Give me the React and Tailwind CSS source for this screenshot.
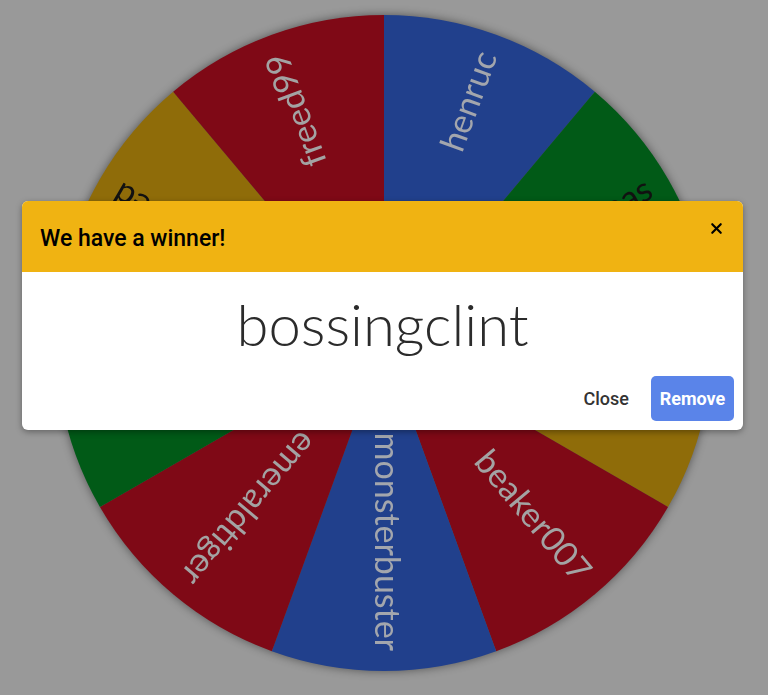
import { X } from "lucide-react";

const CX = 328;
const CY = 328;
const R = 328;

const segments = [
  { name: "henruc", fill: "#21408c", text: "#a3a6ad" },
  { name: "thomas", fill: "#015a17", text: "#111111" },
  { name: "bossingclint", fill: "#8f6c09", text: "#111111" },
  { name: "beaker007", fill: "#7f0916", text: "#a3a3a3" },
  { name: "monsterbuster", fill: "#21408c", text: "#a3a6ad" },
  { name: "emeraldtiger", fill: "#7f0916", text: "#a3a3a3" },
  { name: "jaydenwolf", fill: "#015a17", text: "#111111" },
  { name: "pixelspeed", fill: "#8f6c09", text: "#111111" },
  { name: "freed99", fill: "#7f0916", text: "#a3a3a3" },
];

function point(deg, r) {
  const rad = (deg * Math.PI) / 180;
  return [CX + r * Math.sin(rad), CY - r * Math.cos(rad)];
}

function Wheel() {
  const step = 360 / segments.length;
  return (
    <svg
      width="656"
      height="656"
      viewBox="0 0 656 656"
      className="drop-shadow-[0_0_5px_rgba(0,0,0,0.45)]"
    >
      {segments.map((seg, i) => {
        const a0 = i * step;
        const a1 = a0 + step;
        const [x0, y0] = point(a0, R);
        const [x1, y1] = point(a1, R);
        return (
          <path
            key={seg.name}
            d={`M${CX} ${CY} L${x0} ${y0} A${R} ${R} 0 0 1 ${x1} ${y1} Z`}
            fill={seg.fill}
          />
        );
      })}
      {segments.map((seg, i) => {
        const mid = i * step + step / 2;
        return (
          <text
            key={seg.name + "-label"}
            x={CX + 308}
            y={CY}
            transform={`rotate(${mid - 90} ${CX} ${CY})`}
            textAnchor="end"
            dominantBaseline="middle"
            fill={seg.text}
            style={{ fontFamily: "Lato, 'Noto Sans', sans-serif", fontWeight: 400, fontSize: 34 }}
          >
            {seg.name}
          </text>
        );
      })}
      <circle cx={CX} cy={CY} r="40" fill="#999999" />
    </svg>
  );
}

export default function App() {
  return (
    <div className="relative h-[695px] w-[768px] overflow-hidden bg-[#999999]">
      <div className="flex justify-center pt-[15px]">
        <Wheel />
      </div>

      <div className="absolute inset-0 pl-[22px] pr-[25px] pt-[201px]">
        <div className="overflow-hidden rounded-md bg-white shadow-[0_2px_6px_rgba(0,0,0,0.35)]">
          <div className="flex h-[71px] items-start justify-between bg-[#f0b312] pl-[18px] pr-[18px]">
            <h2 className="pt-[22px] font-['Roboto',sans-serif] text-[23px] font-medium leading-[32px] text-black">
              We have a winner!
            </h2>
            <button className="mt-[19px] text-black" type="button" aria-label="Close">
              <X size={17} strokeWidth={3} />
            </button>
          </div>

          <div className="flex justify-center pt-[20px] pb-[20px]">
            <p className="font-['Lato','Noto_Sans',sans-serif] text-[58px] font-light leading-[64px] text-[#2b2b2b]">
              bossingclint
            </p>
          </div>

          <div className="flex items-center justify-end gap-[22px] pr-[9px] pb-[9px]">
            <button
              className="font-['Roboto',sans-serif] text-[18px] font-medium text-[#333333]"
              type="button"
            >
              Close
            </button>
            <button
              className="h-[45px] w-[83px] rounded-[5px] bg-[#5a84e9] font-['Roboto',sans-serif] text-[18px] font-bold text-white"
              type="button"
            >
              Remove
            </button>
          </div>
        </div>
      </div>
    </div>
  );
}
